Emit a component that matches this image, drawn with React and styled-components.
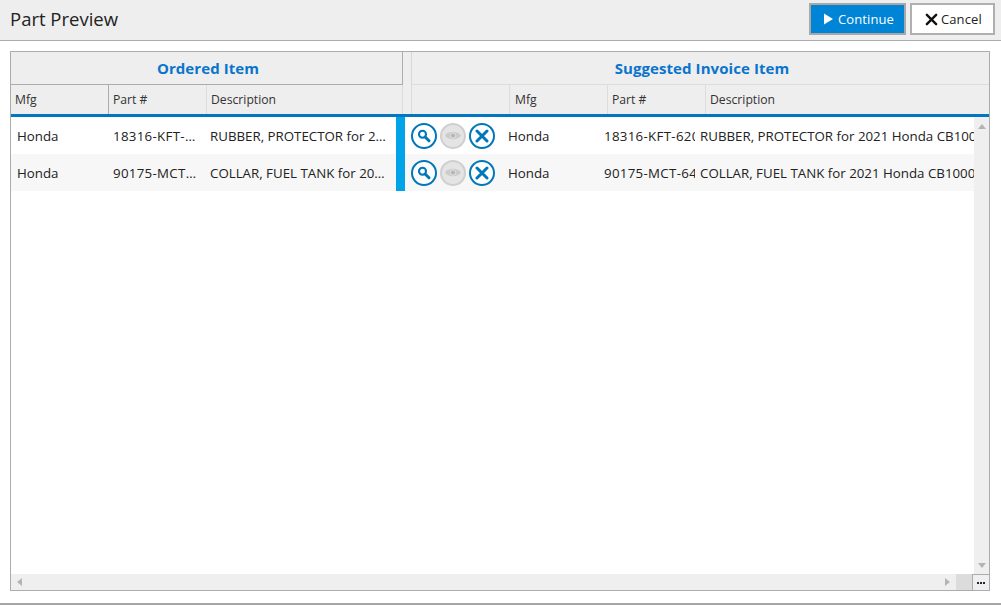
import React from 'react';
import styled, { createGlobalStyle } from 'styled-components';

const Global = createGlobalStyle`
  html, body { margin: 0; padding: 0; background: #fff; }
  body { font-family: "Open Sans", "Noto Sans", "Liberation Sans", sans-serif; }
`;

const Page = styled.div`
  width: 1001px; height: 605px; display: flex; flex-direction: column;
  box-sizing: border-box; border-bottom: 2px solid #a6a6a6; overflow: hidden; background: #fff;
`;
const TitleBar = styled.header`
  height: 41px; flex: none; box-sizing: border-box; background: #eee; border-bottom: 1px solid #acacac;
  display: flex; align-items: flex-start; justify-content: space-between; padding: 3px 6px 0 10px;
`;
const Title = styled.h1`
  margin: 0; font-size: 18.5px; font-weight: 400; color: #222; line-height: 32px;
`;
const Actions = styled.div`display: flex; gap: 4px;`;
const ActionButton = styled.button`
  height: 32px; box-sizing: border-box; border: 2px solid ${p => (p.$primary ? '#a8a8a8' : '#b0b0b0')};
  background: ${p => (p.$primary ? '#0084d6' : '#fff')}; color: ${p => (p.$primary ? '#fff' : '#222')};
  width: ${p => p.$w}px; padding: 0 0 0 ${p => p.$pad}px; font: 400 13px/1 "Open Sans", sans-serif; letter-spacing: .1px;
  display: flex; align-items: center; gap: ${p => p.$gap}px;
`;
const Content = styled.main`flex: 1; min-height: 0; padding: 10px 11px 12px 10px; display: flex;`;
const Table = styled.section`
  flex: 1; box-sizing: border-box; border: 1px solid #acacac; display: flex; flex-direction: column; overflow: hidden; min-width: 0;
`;
const GroupRow = styled.div`
  display: grid; grid-template-columns: 392px 8px 1fr; height: 33px; flex: none; background: #eee;
`;
const GroupCell = styled.div`
  display: flex; align-items: center; justify-content: center; color: #0a74cc; font-weight: 700; font-size: 15px; letter-spacing: .08px;
  box-sizing: border-box; padding-left: ${p => p.$shift}px; border-bottom: 1px solid ${p => (p.$strong ? '#acacac' : '#dcdcdc')};
  border-right: ${p => (p.$strong ? '1px solid #acacac' : 'none')};
  border-left: ${p => (p.$left ? '1px solid #d8d8d8' : 'none')};
`;
const GroupGap = styled.div``;
const ColumnRow = styled.div`
  display: grid; grid-template-columns: 98px 98px 196px 9px 98px 98px 98px 1fr; flex: none; background: #eee;
  border-bottom: 3px solid #0077c0; height: 29px;
`;
const ColumnCell = styled.div`
  display: flex; align-items: center; padding-left: ${p => p.$pad ?? 4}px; font-size: 12.2px; color: #333; box-sizing: border-box;
  border-right: 1px solid ${p => (p.$strong ? '#acacac' : '#dcdcdc')};
  &:last-child { border-right: none; }
`;
const Body = styled.div`flex: 1; min-height: 0; display: flex; flex-direction: column;`;
const BodyMain = styled.div`flex: 1; min-height: 0; display: flex;`;
const BodyFoot = styled.div`flex: none; height: 16px; display: flex; background: #efefef;`;
const Rows = styled.div`flex: 1; min-width: 0; overflow: hidden; background: #fff;`;
const Row = styled.div`
  display: grid; height: 37px; grid-template-columns: 96px 97px 192px 9px 6px 95px 96px 93px 5px 1fr;
  align-items: center; background: ${p => (p.$alt ? '#f7f7f7' : '#fff')}; font-size: 13.3px; color: #222;
`;
const Cell = styled.div`
  padding: 0 ${p => (p.$clip ? 0 : 6)}px 0 ${p => p.$pad}px; box-sizing: border-box; white-space: nowrap; overflow: hidden;
  text-overflow: ${p => (p.$clip ? 'clip' : 'ellipsis')}; letter-spacing: ${p => (p.$part ? '.3px' : 'normal')};
`;
const Marker = styled.div`height: 100%; background: #00a2e8;`;
const RowActions = styled.div`display: flex; gap: 3px;`;
const RoundButton = styled.button`
  width: 26px; height: 26px; box-sizing: border-box; padding: 0; border-radius: 50%; background: ${p => (p.$off ? '#e4e4e4' : '#fff')};
  border: 2px solid ${p => (p.$off ? '#cfcfcf' : '#0077b8')}; display: flex; align-items: center; justify-content: center;
`;
const ScrollV = styled.div`
  flex: none; width: 15px; background: #efefef; display: flex; flex-direction: column; align-items: center; justify-content: space-between; padding: 7px 0 6px 1px; box-sizing: border-box;
`;
const ScrollH = styled.div`
  flex: 1; display: flex; align-items: center; justify-content: space-between; padding-left: 6px;
`;
const ThumbEnd = styled.div`width: 16px; height: 16px; background: #dcdcdc; margin-left: 6px;`;
const RightGroup = styled.div`display: flex; align-items: center;`;
const Corner = styled.button`
  flex: none; width: 17px; box-sizing: border-box; padding: 0; background: #efefef; border: none; border-left: 1px solid #acacac; border-top: 1px solid #acacac;
  display: flex; align-items: center; justify-content: center; gap: 1px;
`;
const Dot = styled.i`width: 2px; height: 2px; background: #223; display: block;`;

const Tri = ({ d, w = 8, h = 5 }) => (
  <svg width={w} height={h} viewBox={`0 0 ${w} ${h}`} style={{ display: 'block' }}><path d={d} fill="#b4b4b4" /></svg>
);
const SearchIcon = () => (
  <svg width="16" height="16" viewBox="0 0 16 16" fill="none" stroke="#0077b8">
    <circle cx="6.5" cy="6.3" r="3.5" strokeWidth="2.1" />
    <path d="M9.4 9.2 13 12.8" strokeWidth="3" strokeLinecap="round" />
  </svg>
);
const EyeIcon = () => (
  <svg width="16" height="11" viewBox="0 0 16 11">
    <path d="M0 5.5C3 .5 13 .5 16 5.5 13 10.5 3 10.5 0 5.5Z" fill="#cbcbcb" />
    <circle cx="8" cy="5.5" r="3.2" fill="#dadada" />
    <circle cx="8" cy="5.5" r="2.1" fill="#b6b6b6" />
  </svg>
);
const CloseIcon = ({ size = 14, color = '#0077b8', w = 3 }) => (
  <svg width={size} height={size} viewBox="0 0 14 14" stroke={color} strokeWidth={w} strokeLinecap="round">
    <path d="M2 2 12 12M12 2 2 12" />
  </svg>
);

const rows = [
  ['18316-KFT-620', 'RUBBER, PROTECTOR for 2021 Honda CB1000'],
  ['90175-MCT-640', 'COLLAR, FUEL TANK for 2021 Honda CB1000'],
];

export default function App() {
  return (
    <Page>
      <Global />
      <TitleBar>
        <Title>Part Preview</Title>
        <Actions>
          <ActionButton $primary $w={97} $pad={13} $gap={5}>
            <svg width="9" height="12" viewBox="0 0 9 12"><path d="M0 .5 9 6 0 11.5Z" fill="#fff" /></svg>
            Continue
          </ActionButton>
          <ActionButton $w={85} $pad={13} $gap={3}>
            <CloseIcon size={13} color="#111" w={2.6} />
            Cancel
          </ActionButton>
        </Actions>
      </TitleBar>
      <Content>
        <Table>
          <GroupRow>
            <GroupCell $strong $shift={3}>Ordered Item</GroupCell>
            <GroupGap />
            <GroupCell $left $shift={3}>Suggested Invoice Item</GroupCell>
          </GroupRow>
          <ColumnRow>
            <ColumnCell $strong>Mfg</ColumnCell>
            <ColumnCell>Part #</ColumnCell>
            <ColumnCell>Description</ColumnCell>
            <ColumnCell />
            <ColumnCell />
            <ColumnCell $pad={5}>Mfg</ColumnCell>
            <ColumnCell>Part #</ColumnCell>
            <ColumnCell>Description</ColumnCell>
          </ColumnRow>
          <Body>
            <BodyMain>
              <Rows>
                {rows.map(([part, desc], i) => (
                  <Row key={part} $alt={i % 2 === 1}>
                    <Cell $pad={6}>Honda</Cell>
                    <Cell $pad={6} $part>{part}</Cell>
                    <Cell $pad={6}>{desc}</Cell>
                    <Marker />
                    <span />
                    <RowActions>
                      <RoundButton><SearchIcon /></RoundButton>
                      <RoundButton $off><EyeIcon /></RoundButton>
                      <RoundButton><CloseIcon /></RoundButton>
                    </RowActions>
                    <Cell $pad={2}>Honda</Cell>
                    <Cell $pad={2} $clip $part>{part}</Cell>
                    <span />
                    <Cell $clip>{desc}</Cell>
                  </Row>
                ))}
              </Rows>
              <ScrollV>
                <Tri d="M4 0 8 5H0Z" />
                <Tri d="M0 0H8L4 5Z" />
              </ScrollV>
            </BodyMain>
            <BodyFoot>
              <ScrollH>
                <Tri d="M5 0V8L0 4Z" w={5} h={8} />
                <RightGroup>
                  <Tri d="M0 0 5 4 0 8Z" w={5} h={8} />
                  <ThumbEnd />
                </RightGroup>
              </ScrollH>
              <Corner><Dot /><Dot /><Dot /></Corner>
            </BodyFoot>
          </Body>
        </Table>
      </Content>
    </Page>
  );
}
